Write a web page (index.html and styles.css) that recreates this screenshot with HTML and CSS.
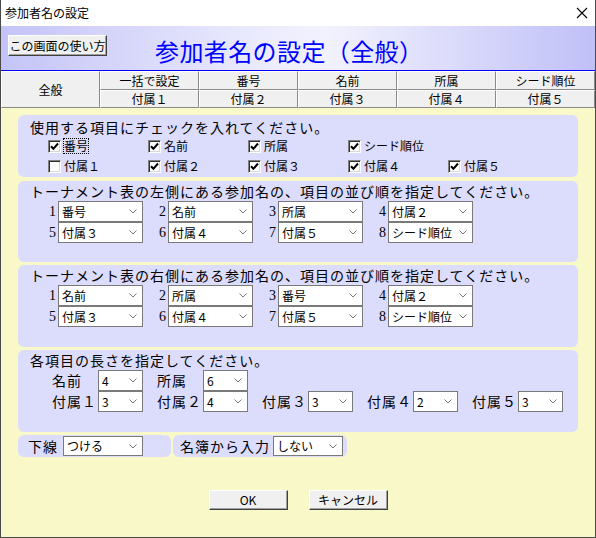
FILE: index.html
```html
<!DOCTYPE html>
<html lang="ja">
<head>
<meta charset="utf-8">
<link rel="stylesheet" href="styles.css">
</head>
<body>
<div class="window">
  <div class="titlebar">
    <span class="wtitle">参加者名の設定</span>
    <svg class="close" width="12" height="12" viewBox="0 0 12 12"><path d="M1 1 L11 11 M11 1 L1 11" stroke="#000" stroke-width="1.1" fill="none"/></svg>
  </div>
  <div class="header">
    <div class="btn help">この画面の使い方</div>
    <div class="bigtitle">参加者名の設定（全般）</div>
  </div>
  <div class="tabs">
    <div class="tab all">全般</div>
    <div class="tab">一括で設定</div>
    <div class="tab">番号</div>
    <div class="tab">名前</div>
    <div class="tab">所属</div>
    <div class="tab">シード順位</div>
    <div class="tab">付属１</div>
    <div class="tab">付属２</div>
    <div class="tab">付属３</div>
    <div class="tab">付属４</div>
    <div class="tab">付属５</div>
  </div>
  <div class="body">
    <div class="panel p1">
      <div class="ptitle">使用する項目にチェックを入れてください。</div>
      <div class="checks">
        <div class="chk"><span class="box on"><svg width="9" height="9" viewBox="0 0 9 9"><path d="M1 4.2 L3.4 6.8 L8 1.5" stroke="#000" stroke-width="2" fill="none"/></svg></span><span class="focus">番号</span></div>
        <div class="chk"><span class="box on"><svg width="9" height="9" viewBox="0 0 9 9"><path d="M1 4.2 L3.4 6.8 L8 1.5" stroke="#000" stroke-width="2" fill="none"/></svg></span><span>名前</span></div>
        <div class="chk"><span class="box on"><svg width="9" height="9" viewBox="0 0 9 9"><path d="M1 4.2 L3.4 6.8 L8 1.5" stroke="#000" stroke-width="2" fill="none"/></svg></span><span>所属</span></div>
        <div class="chk"><span class="box on"><svg width="9" height="9" viewBox="0 0 9 9"><path d="M1 4.2 L3.4 6.8 L8 1.5" stroke="#000" stroke-width="2" fill="none"/></svg></span><span>シード順位</span></div>
        <div class="chk"></div>
        <div class="chk"><span class="box"></span><span>付属１</span></div>
        <div class="chk"><span class="box on"><svg width="9" height="9" viewBox="0 0 9 9"><path d="M1 4.2 L3.4 6.8 L8 1.5" stroke="#000" stroke-width="2" fill="none"/></svg></span><span>付属２</span></div>
        <div class="chk"><span class="box on"><svg width="9" height="9" viewBox="0 0 9 9"><path d="M1 4.2 L3.4 6.8 L8 1.5" stroke="#000" stroke-width="2" fill="none"/></svg></span><span>付属３</span></div>
        <div class="chk"><span class="box on"><svg width="9" height="9" viewBox="0 0 9 9"><path d="M1 4.2 L3.4 6.8 L8 1.5" stroke="#000" stroke-width="2" fill="none"/></svg></span><span>付属４</span></div>
        <div class="chk"><span class="box on"><svg width="9" height="9" viewBox="0 0 9 9"><path d="M1 4.2 L3.4 6.8 L8 1.5" stroke="#000" stroke-width="2" fill="none"/></svg></span><span>付属５</span></div>
      </div>
    </div>

    <div class="panel p2">
      <div class="ptitle">トーナメント表の左側にある参加名の、項目の並び順を指定してください。</div>
      <div class="order">
        <span class="num">1</span><div class="sel w85"><span>番号</span><svg class="arr" width="8" height="5" viewBox="0 0 8 5"><path d="M0.5 0.5 L4 4 L7.5 0.5" stroke="#777" fill="none"/></svg></div>
        <span class="num">2</span><div class="sel w85"><span>名前</span><svg class="arr" width="8" height="5" viewBox="0 0 8 5"><path d="M0.5 0.5 L4 4 L7.5 0.5" stroke="#777" fill="none"/></svg></div>
        <span class="num">3</span><div class="sel w85"><span>所属</span><svg class="arr" width="8" height="5" viewBox="0 0 8 5"><path d="M0.5 0.5 L4 4 L7.5 0.5" stroke="#777" fill="none"/></svg></div>
        <span class="num">4</span><div class="sel w85"><span>付属２</span><svg class="arr" width="8" height="5" viewBox="0 0 8 5"><path d="M0.5 0.5 L4 4 L7.5 0.5" stroke="#777" fill="none"/></svg></div>
        <span class="num">5</span><div class="sel w85"><span>付属３</span><svg class="arr" width="8" height="5" viewBox="0 0 8 5"><path d="M0.5 0.5 L4 4 L7.5 0.5" stroke="#777" fill="none"/></svg></div>
        <span class="num">6</span><div class="sel w85"><span>付属４</span><svg class="arr" width="8" height="5" viewBox="0 0 8 5"><path d="M0.5 0.5 L4 4 L7.5 0.5" stroke="#777" fill="none"/></svg></div>
        <span class="num">7</span><div class="sel w85"><span>付属５</span><svg class="arr" width="8" height="5" viewBox="0 0 8 5"><path d="M0.5 0.5 L4 4 L7.5 0.5" stroke="#777" fill="none"/></svg></div>
        <span class="num">8</span><div class="sel w85"><span>シード順位</span><svg class="arr" width="8" height="5" viewBox="0 0 8 5"><path d="M0.5 0.5 L4 4 L7.5 0.5" stroke="#777" fill="none"/></svg></div>
      </div>
    </div>

    <div class="panel p3">
      <div class="ptitle">トーナメント表の右側にある参加名の、項目の並び順を指定してください。</div>
      <div class="order">
        <span class="num">1</span><div class="sel w85"><span>名前</span><svg class="arr" width="8" height="5" viewBox="0 0 8 5"><path d="M0.5 0.5 L4 4 L7.5 0.5" stroke="#777" fill="none"/></svg></div>
        <span class="num">2</span><div class="sel w85"><span>所属</span><svg class="arr" width="8" height="5" viewBox="0 0 8 5"><path d="M0.5 0.5 L4 4 L7.5 0.5" stroke="#777" fill="none"/></svg></div>
        <span class="num">3</span><div class="sel w85"><span>番号</span><svg class="arr" width="8" height="5" viewBox="0 0 8 5"><path d="M0.5 0.5 L4 4 L7.5 0.5" stroke="#777" fill="none"/></svg></div>
        <span class="num">4</span><div class="sel w85"><span>付属２</span><svg class="arr" width="8" height="5" viewBox="0 0 8 5"><path d="M0.5 0.5 L4 4 L7.5 0.5" stroke="#777" fill="none"/></svg></div>
        <span class="num">5</span><div class="sel w85"><span>付属３</span><svg class="arr" width="8" height="5" viewBox="0 0 8 5"><path d="M0.5 0.5 L4 4 L7.5 0.5" stroke="#777" fill="none"/></svg></div>
        <span class="num">6</span><div class="sel w85"><span>付属４</span><svg class="arr" width="8" height="5" viewBox="0 0 8 5"><path d="M0.5 0.5 L4 4 L7.5 0.5" stroke="#777" fill="none"/></svg></div>
        <span class="num">7</span><div class="sel w85"><span>付属５</span><svg class="arr" width="8" height="5" viewBox="0 0 8 5"><path d="M0.5 0.5 L4 4 L7.5 0.5" stroke="#777" fill="none"/></svg></div>
        <span class="num">8</span><div class="sel w85"><span>シード順位</span><svg class="arr" width="8" height="5" viewBox="0 0 8 5"><path d="M0.5 0.5 L4 4 L7.5 0.5" stroke="#777" fill="none"/></svg></div>
      </div>
    </div>

    <div class="panel p4">
      <div class="ptitle">各項目の長さを指定してください。</div>
      <div class="lens">
        <span class="lab">名前</span><div class="sel w45"><span>4</span><svg class="arr" width="8" height="5" viewBox="0 0 8 5"><path d="M0.5 0.5 L4 4 L7.5 0.5" stroke="#777" fill="none"/></svg></div>
        <span class="lab">所属</span><div class="sel w45"><span>6</span><svg class="arr" width="8" height="5" viewBox="0 0 8 5"><path d="M0.5 0.5 L4 4 L7.5 0.5" stroke="#777" fill="none"/></svg></div>
        <span></span><span></span><span></span><span></span><span></span><span></span>
        <span class="lab">付属１</span><div class="sel w45"><span>3</span><svg class="arr" width="8" height="5" viewBox="0 0 8 5"><path d="M0.5 0.5 L4 4 L7.5 0.5" stroke="#777" fill="none"/></svg></div>
        <span class="lab">付属２</span><div class="sel w45"><span>4</span><svg class="arr" width="8" height="5" viewBox="0 0 8 5"><path d="M0.5 0.5 L4 4 L7.5 0.5" stroke="#777" fill="none"/></svg></div>
        <span class="lab">付属３</span><div class="sel w45"><span>3</span><svg class="arr" width="8" height="5" viewBox="0 0 8 5"><path d="M0.5 0.5 L4 4 L7.5 0.5" stroke="#777" fill="none"/></svg></div>
        <span class="lab">付属４</span><div class="sel w45"><span>2</span><svg class="arr" width="8" height="5" viewBox="0 0 8 5"><path d="M0.5 0.5 L4 4 L7.5 0.5" stroke="#777" fill="none"/></svg></div>
        <span class="lab">付属５</span><div class="sel w45"><span>3</span><svg class="arr" width="8" height="5" viewBox="0 0 8 5"><path d="M0.5 0.5 L4 4 L7.5 0.5" stroke="#777" fill="none"/></svg></div>
      </div>
    </div>

    <div class="row5">
      <div class="panel mini ma">
        <span class="lab2">下線</span><div class="sel w80"><span>つける</span><svg class="arr" width="8" height="5" viewBox="0 0 8 5"><path d="M0.5 0.5 L4 4 L7.5 0.5" stroke="#777" fill="none"/></svg></div>
      </div>
      <div class="panel mini mb">
        <span class="lab2">名簿から入力</span><div class="sel w70"><span>しない</span><svg class="arr" width="8" height="5" viewBox="0 0 8 5"><path d="M0.5 0.5 L4 4 L7.5 0.5" stroke="#777" fill="none"/></svg></div>
      </div>
    </div>

    <div class="actions">
      <div class="btn act">OK</div>
      <div class="btn act">キャンセル</div>
    </div>
  </div>
</div>
</body>
</html>
```

FILE: styles.css
```css
* { box-sizing: border-box; }
html, body { margin: 0; padding: 0; }
body {
  width: 596px;
  height: 538px;
  overflow: hidden;
  font-family: "Noto Sans CJK JP", "Noto Sans", sans-serif;
  color: #000;
  background: #fff;
}
.window {
  width: 596px;
  height: 538px;
  border-left: 1px solid #4a4a4a;
  border-right: 1px solid #4a4a4a;
  border-bottom: 1px solid #4a4a4a;
  display: flex;
  flex-direction: column;
}
.titlebar {
  height: 26px;
  background: #fff;
  display: flex;
  align-items: center;
  justify-content: space-between;
  padding: 0 7px 0 4px;
}
.wtitle { font-size: 12px; line-height: 14px; }
.close { display: block; }

.header {
  height: 45px;
  border-bottom: 1px solid #0000ff;
  background: linear-gradient(to right, #c4c4f8 0%, #ececfe 45%, #f2f2fe 55%, #c0c0f8 100%);
  display: flex;
  align-items: flex-start;
  padding: 9px 0 0 7px;
}
.btn {
  background: #f0f0f0;
  border: 1px solid;
  border-color: #fff #404040 #404040 #fff;
  box-shadow: inset -1px -1px 0 #a0a0a0;
  font-size: 12px;
  display: flex;
  align-items: center;
  justify-content: center;
}
.help {
  width: 99px;
  height: 21px;
  line-height: 14px;
}
.bigtitle {
  margin-left: 48px;
  margin-top: 1px;
  font-size: 24px;
  line-height: 30px;
  letter-spacing: 0.4px;
  color: #0000ff;
}

.tabs {
  display: grid;
  grid-template-columns: repeat(6, 99px);
  grid-template-rows: 19px 18px;
  background: #f0f0f0;
}
.tab {
  border: 1px solid;
  border-color: #fff #8a8a8a #8a8a8a #fff;
  font-size: 12px;
  line-height: 14px;
  display: flex;
  align-items: center;
  justify-content: center;
  background: #f0f0f0;
}
.tab.all { grid-row: span 2; }

.body {
  flex: 1;
  background: #f9f8c8;
  padding: 7px 0 0 17px;
}
.panel {
  background: #dcdcfc;
  border-radius: 6px;
  width: 560px;
}
.ptitle {
  font-size: 14px;
  letter-spacing: 1px;
  line-height: 18px;
  padding-left: 12px;
  white-space: nowrap;
}
.p1 { height: 62px; padding-top: 3px; }
.p2 { height: 81px; margin-top: 4px; padding-top: 1px; }
.p3 { height: 82px; margin-top: 3px; padding-top: 1px; }
.p4 { height: 82px; margin-top: 3px; padding-top: 1px; }
.p2 .ptitle, .p3 .ptitle, .p4 .ptitle { height: 19px; }

.checks {
  display: grid;
  grid-template-columns: repeat(5, 100px);
  grid-auto-rows: 20px;
  padding-left: 30px;
}
.chk {
  display: flex;
  align-items: center;
  gap: 3px;
  font-size: 12px;
  line-height: 14px;
}
.box {
  width: 13px;
  height: 13px;
  background: #fff;
  border: 1px solid;
  border-color: #808080 #fff #fff #808080;
  box-shadow: inset 1px 1px 0 #303030, inset -1px -1px 0 #d8d8d8;
  display: flex;
  align-items: center;
  justify-content: center;
  flex: none;
}
.box svg { display: block; }
.focus { outline: 1px dotted #000; outline-offset: 0; }

.order {
  display: grid;
  grid-template-columns: repeat(4, 12px 85px 13px);
  grid-auto-rows: 21px;
  padding-left: 28px;
}
.order .sel:nth-of-type(4n) { }
.num {
  font-family: "Liberation Serif", "DejaVu Serif", serif;
  font-size: 14px;
  text-align: right;
  padding-right: 2px;
  line-height: 21px;
}
.order > .sel { grid-column: auto / span 2; width: 85px; }

.sel {
  height: 21px;
  background: #fff;
  border: 1px solid #7a7a7a;
  display: flex;
  align-items: center;
  justify-content: space-between;
  padding: 0 5px 0 3px;
  font-size: 12px;
  line-height: 14px;
  white-space: nowrap;
}
.sel .arr { display: block; flex: none; }
.w85 { width: 85px; }
.w45 { width: 45px; }
.w80 { width: 80px; height: 20px; }
.w70 { width: 70px; height: 20px; }

.lens {
  display: grid;
  grid-template-columns: repeat(5, 46px 59px);
  grid-auto-rows: 21px;
  padding-left: 34px;
}
.lab {
  font-size: 14px;
  letter-spacing: 1px;
  line-height: 21px;
  white-space: nowrap;
}

.row5 {
  display: flex;
  gap: 2px;
  margin-top: 3px;
}
.mini {
  height: 22px;
  display: flex;
  align-items: center;
  border-radius: 6px;
}
.ma { width: 153px; padding-left: 10px; }
.mb { width: 174px; padding-left: 7px; }
.lab2 {
  font-size: 14px;
  letter-spacing: 1px;
  line-height: 18px;
  white-space: nowrap;
}
.ma .lab2 { margin-right: 5px; }
.mb .lab2 { margin-right: 3px; }

.actions {
  display: flex;
  justify-content: center;
  gap: 21px;
  margin-top: 33px;
  padding-right: 17px;
}
.act {
  width: 79px;
  height: 20px;
  line-height: 14px;
}
```
